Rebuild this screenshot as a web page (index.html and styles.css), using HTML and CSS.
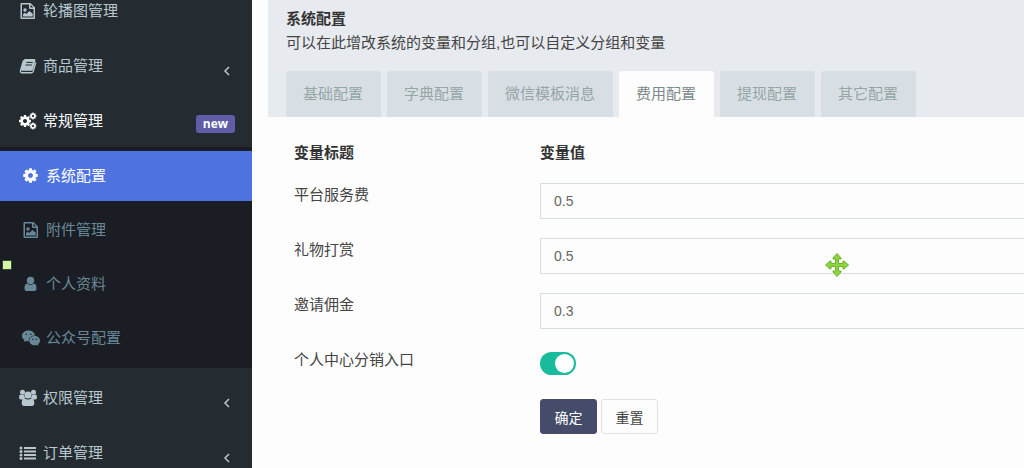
FILE: index.html
```
<!DOCTYPE html>
<html lang="zh-CN">
<head>
    <meta charset="UTF-8">
    <meta name="viewport" content="width=device-width, initial-scale=1.0">
    <title>系统配置</title>
    <link rel="stylesheet" href="styles.css">
</head>
<body>
    <!-- icons -->
    <svg class="icon-defs" aria-hidden="true">
        <symbol id="icon-cog" viewBox="0 0 1792 1792">
            <path d="M1152 896q0-106-75-181t-181-75-181 75-75 181 75 181 181 75 181-75 75-181zm512-109v222q0 12-8 23t-20 13l-185 28q-19 54-39 91 35 50 107 138 10 12 10 25t-9 23q-27 37-99 108t-94 71q-12 0-26-9l-138-108q-44 23-91 38-16 136-29 186-7 28-36 28h-222q-14 0-24.5-8.5t-11.5-21.5l-28-184q-49-16-90-37l-141 107q-10 9-25 9-14 0-25-11-126-114-165-168-7-10-7-23 0-12 8-23 15-21 51-66.5t54-70.5q-27-50-41-99l-183-27q-13-2-21-12.5t-8-23.5v-222q0-12 8-23t19-13l186-28q14-46 39-92-40-57-107-138-10-12-10-24 0-10 9-23 26-36 98.5-107.5t94.5-71.5q13 0 26 10l138 107q44-23 91-38 16-136 29-186 7-28 36-28h222q14 0 24.5 8.5t11.5 21.5l28 184q49 16 90 37l142-107q9-9 24-9 13 0 25 10 129 119 165 170 7 8 7 22 0 12-8 23-15 21-51 66.5t-54 70.5q26 50 41 98l183 28q13 2 21 12.5t8 23.5z"/>
        </symbol>
        <symbol id="icon-setting" viewBox="0 0 18 18">
            <use href="#icon-cog" x="0" y="0" width="17" height="17"/>
        </symbol>
        <symbol id="icon-cogs" viewBox="0 0 18 18">
            <use href="#icon-cog" x="-1" y="2" width="14" height="14"/>
            <use href="#icon-cog" x="10" y="0" width="8" height="8"/>
            <use href="#icon-cog" x="10" y="10" width="8" height="8"/>
        </symbol>
        <symbol id="icon-image" viewBox="0 0 18 18">
            <path fill-rule="evenodd" d="M2.500 1h9L16 5.500V16a1 1 0 0 1-1 1H2.500a1 1 0 0 1-1-1V2a1 1 0 0 1 1-1zM3 2.500v13h11.500V7H11a1 1 0 0 1-1-1V2.500zm8.500.3v2.700h2.700z"/>
            <circle cx="6" cy="8" r="1.700"/>
            <path d="M4 14.500v-2.300l1.700-1.500 1.600 1.200L10.500 9l3.200 2.700v2.800z"/>
        </symbol>
        <symbol id="icon-book" viewBox="0 0 18 18">
            <path d="M6.500 2h8.700c1 0 1.500.8 1.200 1.800l-2.600 8.800c-.3.900-1 1.300-1.900 1.300H3.200L2 13l2.400-9.500C4.700 2.600 5.500 2 6.500 2z"/>
            <path d="M4.500 3.500 1.600 13.200c-.5 1.500.2 2.600 1.700 2.600h9c1 0 1.500-.5 1.800-1.300L16.800 5.500" fill="none" stroke="currentColor" stroke-width="1.400"/>
            <path class="cut" d="M7.300 5.400h6.400M6.500 8h6.400M3.300 14.300h8.900"/>
        </symbol>
        <symbol id="icon-user" viewBox="0 0 18 18">
            <circle cx="8.500" cy="5.500" r="3.700"/>
            <path d="M5 8.500q3.500 2.800 7 0 2.500.6 2.500 4.700 0 2.800-2.300 2.800H4.800q-2.300 0-2.300-2.800 0-4.100 2.500-4.700z"/>
        </symbol>
        <symbol id="icon-users" viewBox="0 0 18 18">
            <circle cx="3.500" cy="3.200" r="2.500"/>
            <circle cx="14.500" cy="3.200" r="2.500"/>
            <circle cx="9" cy="6" r="3.600"/>
            <path d="M1.800 5.400q1.500 1 3.200.5.100 2 1.300 3.200Q4.600 9.200 3.600 10.500H1.800Q0 10.500 0 8.800q0-3.400 1.800-3.400zM16.200 5.400q-1.500 1-3.200.5-.1 2-1.300 3.200 1.700.1 2.700 1.400h1.800q1.800 0 1.800-1.700 0-3.400-1.800-3.400zM5.500 9.300Q9 11.800 12.500 9.300q2.800.4 2.800 5 0 2.700-2.400 2.700H5.100q-2.400 0-2.400-2.700 0-4.600 2.800-5z"/>
        </symbol>
        <symbol id="icon-wechat" viewBox="0 0 18 18">
            <path fill-rule="evenodd" d="M6.500 1.500C10 1.500 12.700 3.700 13.200 6.400 9 6.400 6.200 9 6.800 12.300q-1.400.1-2.700-.4L1.900 13l.6-2C.8 9.900-.1 8.500-.1 7c0-3 3-5.500 6.600-5.500zM4.400 4.500a.8.800 0 1 0 0 1.600.8.800 0 0 0 0-1.600zm4.400 0a.8.800 0 1 0 0 1.600.8.800 0 0 0 0-1.600z"/>
            <path fill-rule="evenodd" d="M12.700 7.100c3 0 5.300 2.100 5.300 4.600 0 1.400-.8 2.700-2 3.600l.4 1.500-1.700-.8q-1 .3-2 .3c-3 0-5.400-2.100-5.400-4.600s2.400-4.600 5.400-4.600zm-1.800 2.500a.7.700 0 1 0 0 1.400.7.700 0 0 0 0-1.400zm3.500 0a.7.700 0 1 0 0 1.400.7.700 0 0 0 0-1.400z"/>
        </symbol>
        <symbol id="icon-list" viewBox="0 0 18 18">
            <circle cx="2" cy="4" r="1.500"/>
            <circle cx="2" cy="7.500" r="1.500"/>
            <circle cx="2" cy="11" r="1.500"/>
            <circle cx="2" cy="14.500" r="1.500"/>
            <path d="M5 3h12v2H5zM5 6.500h12v2H5zM5 10h12v2H5zM5 13.500h12v2H5z"/>
        </symbol>
        <symbol id="icon-angle" viewBox="0 0 10 10">
            <path d="M7 1 3 5l4 4" fill="none" stroke="currentColor" stroke-width="1.500"/>
        </symbol>
    </svg>

    <div class="wrapper">
        <nav class="sidebar">
            <ul class="menu">
                <li><a href="#"><svg class="icon"><use href="#icon-image"/></svg><span>轮播图管理</span></a></li>
                <li><a href="#"><svg class="icon"><use href="#icon-book"/></svg><span>商品管理</span><svg class="angle"><use href="#icon-angle"/></svg></a></li>
                <li class="open">
                    <a href="#"><svg class="icon"><use href="#icon-cogs"/></svg><span>常规管理</span><small class="badge">new</small></a>
                    <ul class="submenu">
                        <li class="active"><a href="#"><svg class="icon"><use href="#icon-setting"/></svg><span>系统配置</span></a></li>
                        <li><a href="#"><svg class="icon"><use href="#icon-image"/></svg><span>附件管理</span></a></li>
                        <li><a href="#"><svg class="icon"><use href="#icon-user"/></svg><span>个人资料</span></a></li>
                        <li><a href="#"><svg class="icon"><use href="#icon-wechat"/></svg><span>公众号配置</span></a></li>
                    </ul>
                </li>
                <li><a href="#"><svg class="icon"><use href="#icon-users"/></svg><span>权限管理</span><svg class="angle"><use href="#icon-angle"/></svg></a></li>
                <li><a href="#"><svg class="icon"><use href="#icon-list"/></svg><span>订单管理</span><svg class="angle"><use href="#icon-angle"/></svg></a></li>
            </ul>
        </nav>

        <main class="content">
            <div class="panel-heading">
                <div class="panel-lead">
                    <strong>系统配置</strong>
                    <p>可以在此增改系统的变量和分组,也可以自定义分组和变量</p>
                </div>
                <ul class="tabs">
                    <li><a href="#">基础配置</a></li>
                    <li><a href="#">字典配置</a></li>
                    <li><a href="#">微信模板消息</a></li>
                    <li class="active"><a href="#">费用配置</a></li>
                    <li><a href="#">提现配置</a></li>
                    <li><a href="#">其它配置</a></li>
                </ul>
            </div>

            <form class="panel-body">
                <table class="config-table">
                    <thead>
                        <tr><th class="col-title">变量标题</th><th>变量值</th></tr>
                    </thead>
                    <tbody>
                        <tr>
                            <td><label for="service-fee">平台服务费</label></td>
                            <td><input class="form-control" type="text" id="service-fee" value="0.5"></td>
                        </tr>
                        <tr>
                            <td><label for="gift-fee">礼物打赏</label></td>
                            <td><input class="form-control" type="text" id="gift-fee" value="0.5"></td>
                        </tr>
                        <tr>
                            <td><label for="invite-fee">邀请佣金</label></td>
                            <td><input class="form-control" type="text" id="invite-fee" value="0.3"></td>
                        </tr>
                        <tr>
                            <td><label for="share-entry">个人中心分销入口</label></td>
                            <td><input class="switch" type="checkbox" id="share-entry" checked></td>
                        </tr>
                        <tr>
                            <td></td>
                            <td>
                                <div class="actions">
                                    <button type="submit" class="btn btn-primary">确定</button>
                                    <button type="reset" class="btn">重置</button>
                                </div>
                            </td>
                        </tr>
                    </tbody>
                </table>
            </form>
        </main>
    </div>

    <span class="marker"></span>
    <svg class="move-cursor" viewBox="0 0 24 24" aria-hidden="true">
        <path d="M12 .5 16 5v1h-2.500v4.500H18V8h1l4.500 4-4.500 4h-1v-2.500h-4.500V18H16v1l-4 4.500L8 19v-1h2.500v-4.500H6V16H5L.5 12 5 8h1v2.500h4.500V6H8V5z"/>
    </svg>
</body>
</html>
```

FILE: styles.css
```
* {
    box-sizing: border-box;
}

body {
    margin: 0;
    font-family: "Liberation Sans", "Noto Sans CJK SC", sans-serif;
    font-size: 15px;
    line-height: 24px;
    color: #444;
    background-color: #fdfdfd;
    overflow: hidden;
}

ul {
    list-style: none;
    margin: 0;
    padding: 0;
}

a {
    text-decoration: none;
    color: inherit;
}

.icon-defs {
    display: none;
}

.wrapper {
    display: flex;
    height: 100vh;
}

/* sidebar */
.sidebar {
    flex: 0 0 252px;
    background-color: #242c32;
    color: #b8c7ce;
    overflow: hidden;
}

/* menu is scrolled down a little */
.menu {
    display: flex;
    flex-direction: column;
    gap: 5px;
    margin-top: -14px;
}

.menu a {
    display: flex;
    align-items: center;
    height: 50px;
    padding: 0 17px 0 19px;
}

.icon {
    width: 18px;
    height: 18px;
    margin-right: 6px;
    fill: currentColor;
}

.cut {
    fill: none;
    stroke: #242c32;
    stroke-width: 1;
}

.angle {
    width: 10px;
    height: 10px;
    margin: 10px 3px 0 auto;
}

.badge {
    margin: 5px 0 0 auto;
    padding: 0 7px;
    border-radius: 3px;
    background-color: #605ca8;
    color: #fff;
    font-family: "Open Sans", sans-serif;
    font-size: 12px;
    font-weight: bold;
    line-height: 18px;
}

.open > a {
    color: #fff;
}

.submenu {
    display: flex;
    flex-direction: column;
    gap: 4px;
    margin-top: 1px;
    padding: 4px 0 5px;
    background-color: #1a1e24;
    color: #698897;
}

.submenu a {
    padding-left: 22px;
}

.submenu .active {
    background-color: #4e73df;
    color: #fff;
}

/* content */
.content {
    flex: 1;
    min-width: 0;
    padding-left: 16px;
}

.panel-heading {
    padding: 7px 17px 0 18px;
    background-color: #e7eaee;
}

.panel-lead {
    margin-bottom: 16px;
}

.panel-lead strong {
    color: #333;
}

.panel-lead p {
    margin: 0;
}

.tabs {
    display: flex;
    gap: 6px;
}

.tabs a {
    display: block;
    padding: 11px 18px 11px 17px;
    border-radius: 3px 3px 0 0;
    background-color: #d8dfe4;
    color: #95a5a6;
}

.tabs .active a {
    background-color: #fdfdfd;
    color: #7b8a8b;
}

.panel-body {
    padding: 16px 0 0 26px;
}

.config-table {
    width: 100%;
    border-collapse: collapse;
    table-layout: fixed;
}

.config-table th {
    padding: 8px 0 9px;
    text-align: left;
    color: #333;
}

.config-table .col-title {
    width: 246px;
}

.config-table td {
    padding: 9px 0 10px;
    vertical-align: top;
}

/* fields run to the window edge, so no border on the right */
.form-control {
    display: block;
    width: 100%;
    height: 36px;
    padding: 6px 13px;
    border: 1px solid #d8dce3;
    border-right: 0;
    border-radius: 0;
    background-color: #fdfdfd;
    color: #666;
    font-family: inherit;
    font-size: 14px;
}

.switch {
    display: block;
    appearance: none;
    width: 36px;
    height: 23px;
    margin: 4px 0 5px;
    padding: 2px;
    border-radius: 12px;
    background-color: #18bc9c;
}

.switch::before {
    content: "";
    display: block;
    width: 19px;
    height: 19px;
    border-radius: 50%;
    background-color: #fff;
}

.switch:checked::before {
    margin-left: auto;
}

.actions {
    display: flex;
    gap: 4px;
}

.btn {
    width: 57px;
    height: 35px;
    padding: 0;
    border: 1px solid #e0e2e6;
    border-radius: 3px;
    background-color: #fdfdfd;
    color: #444;
    font-family: inherit;
    font-size: 14px;
}

.btn-primary {
    border-color: #444c69;
    background-color: #444c69;
    color: #fff;
}

/* overlays */
.marker {
    position: absolute;
    left: 2px;
    top: 260px;
    width: 10px;
    height: 10px;
    border: 1px solid #3d4433;
    background-color: #d5f8a4;
}

.move-cursor {
    position: absolute;
    left: 825px;
    top: 253px;
    width: 24px;
    height: 24px;
    fill: #8cd63c;
    stroke: #6fae35;
    stroke-width: 1;
}
```
